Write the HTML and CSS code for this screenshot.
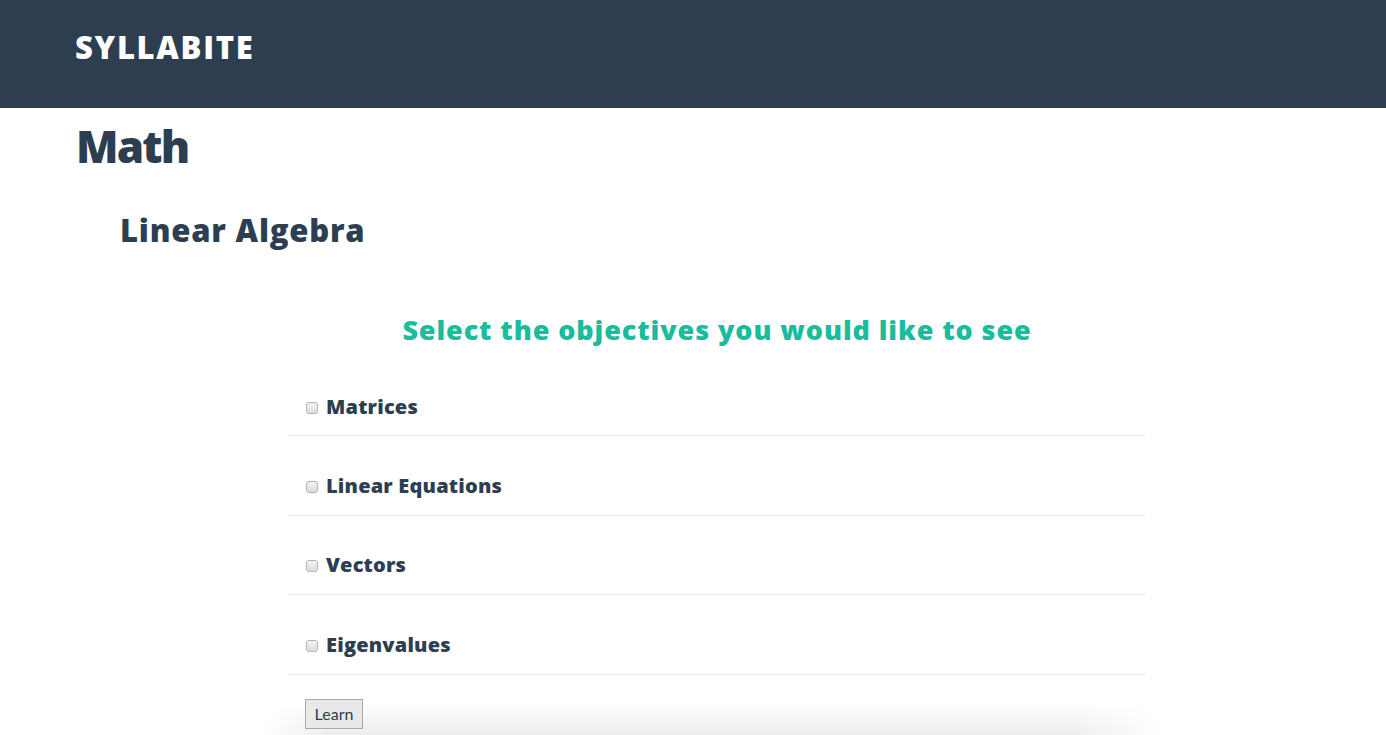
FILE: index.html
```html
<!DOCTYPE html>
<html>
<head>
<meta charset="utf-8">
<title>Syllabite</title>
<link rel="stylesheet" href="styles.css">
</head>
<body>
<header class="topbar">
  <div class="brand">SYLLABITE</div>
</header>
<main class="page">
  <h1 class="subject">Math</h1>
  <h2 class="course">Linear Algebra</h2>
  <section class="objectives">
    <h3 class="objectives-title">Select the objectives you would like to see</h3>
    <form class="objective-form">
      <label class="objective"><input type="checkbox" class="objective-check"><span class="objective-name">Matrices</span></label>
      <label class="objective"><input type="checkbox" class="objective-check"><span class="objective-name">Linear Equations</span></label>
      <label class="objective"><input type="checkbox" class="objective-check"><span class="objective-name">Vectors</span></label>
      <label class="objective"><input type="checkbox" class="objective-check"><span class="objective-name">Eigenvalues</span></label>
      <div class="actions"><button type="button" class="learn-btn">Learn</button></div>
    </form>
  </section>
</main>
</body>
</html>
```
FILE: styles.css
```css
html {
  background: #ffffff;
  overflow: hidden;
}
body {
  margin: 0;
  padding: 0;
  font-family: "Open Sans", "Liberation Sans", sans-serif;
  color: #2c3e50;
}
.topbar {
  height: 108px;
  background: #2c3e50;
  display: flex;
  align-items: center;
  padding-left: 75px;
  box-sizing: border-box;
}
.brand {
  color: #ffffff;
  font-weight: 800;
  font-size: 31px;
  line-height: 1;
  margin-top: -14px;
  letter-spacing: 1.7px;
}
.page {
  padding-left: 76px;
}
.subject {
  margin: 0;
  padding-top: 14px;
  font-size: 44px;
  font-weight: 800;
  line-height: 48px;
  letter-spacing: -1.8px;
}
.course {
  margin: 42px 0 0 44px;
  font-size: 31px;
  font-weight: 800;
  line-height: 36px;
  letter-spacing: 0.8px;
}
.objectives {
  width: 858px;
  margin: 64px 0 0 212px;
  position: relative;
}
.objectives::after {
  content: "";
  position: absolute;
  left: -24px;
  right: -14px;
  bottom: 0;
  height: 34px;
  z-index: -1;
  background: linear-gradient(to bottom, rgba(0, 0, 0, 0), rgba(0, 0, 0, 0.075));
  -webkit-mask-image: linear-gradient(to right, transparent, #000 7%, #000 90%, transparent);
  mask-image: linear-gradient(to right, transparent, #000 7%, #000 90%, transparent);
  border-radius: 30px 30px 0 0;
}
.objectives-title {
  margin: 0;
  text-align: center;
  color: #1abc9c;
  font-size: 27px;
  font-weight: 800;
  line-height: 36px;
  letter-spacing: 0.9px;
}
.objective-form {
  margin-top: 9px;
}
.objective {
  display: flex;
  align-items: center;
  height: 79.4px;
  padding: 20px 0 0 17px;
  box-sizing: border-box;
  border-bottom: 1px solid #eeeeee;
}
.objective-check {
  -webkit-appearance: none;
  appearance: none;
  width: 12px;
  height: 12px;
  margin: 3px 8px 0 1px;
  border: 1px solid #b3b3b3;
  border-radius: 3px;
  background: linear-gradient(to bottom, #f4f4f4, #dcdcdc);
  box-sizing: border-box;
}
.objective-name {
  font-size: 20px;
  font-weight: 800;
  letter-spacing: 0.2px;
}
.actions {
  padding: 24px 0 7px 17px;
}
.learn-btn {
  display: block;
  font-family: "Lato", "Liberation Sans", sans-serif;
  font-size: 16px;
  color: #2c3e50;
  background: #e9e9e9;
  border: 1px solid #a9a9a9;
  border-radius: 0;
  width: 58px;
  height: 30px;
  padding: 0;
}
```
